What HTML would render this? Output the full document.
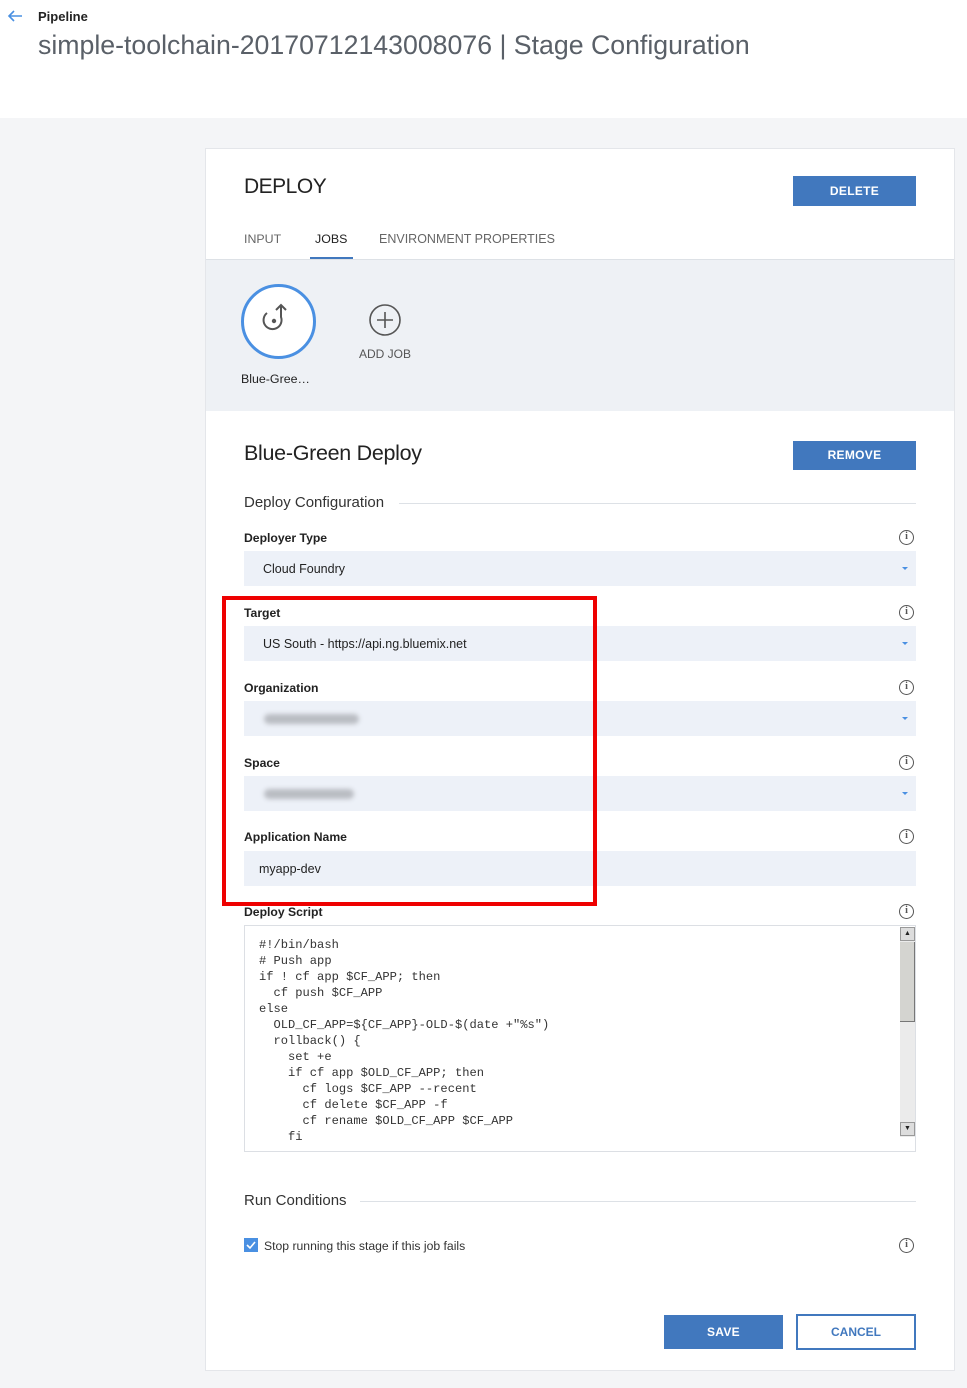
<!DOCTYPE html>
<html><head><meta charset="utf-8"><style>
*{box-sizing:border-box;margin:0;padding:0}
body{width:967px;height:1388px;background:#f4f5f7;font-family:"Liberation Sans",sans-serif;position:relative;overflow:hidden;color:#222}
.a{position:absolute}
.top{left:0;top:0;width:967px;height:118px;background:#fff}
.card{left:205px;top:148px;width:750px;height:1223px;background:#fff;border:1px solid #e4e6ea}
.lbl{font-size:12.2px;font-weight:bold;color:#222}
.inp{left:244px;width:672px;height:35px;background:#edf1f8;font-size:12.5px;color:#222;line-height:36px;padding-left:19px}
.arr{position:absolute;right:8px;top:16px;width:0;height:0;border-left:3px solid transparent;border-right:3px solid transparent;border-top:3px solid #4a90e2}
.info{width:15px;height:15px;border:1.3px solid #555;border-radius:50%;font:bold 10px "Liberation Serif",serif;color:#555;text-align:center;line-height:12px;left:899px}
.btn{background:#4178be;color:#fff;font-size:12px;font-weight:bold;text-align:center;letter-spacing:0.3px}
.blur{position:absolute;left:20px;top:13px;height:10px;background:#b9bcc2;border-radius:5px;filter:blur(2.5px)}
pre{font-family:"Liberation Mono",monospace;font-size:12.1px;line-height:16px;color:#333}
</style></head><body>
<div class="a top"></div>
<svg class="a" style="left:6px;top:9px" width="18" height="14"><path d="M16 7H3M8 2L3 7l5 5" stroke="#4a90e2" stroke-width="1.6" fill="none"/></svg>
<div class="a" style="left:38px;top:9px;font-size:13px;font-weight:bold;color:#222">Pipeline</div>
<div class="a" style="left:38px;top:30px;font-size:26.7px;color:#5a6068">simple-toolchain-20170712143008076 | Stage Configuration</div>

<div class="a card"></div>
<div class="a" style="left:244px;top:175px;font-size:21px;color:#222;letter-spacing:-0.5px">DEPLOY</div>
<div class="a btn" style="left:793px;top:176px;width:123px;height:30px;line-height:31px">DELETE</div>
<div class="a" style="left:244px;top:232px;font-size:12.4px;color:#666">INPUT</div>
<div class="a" style="left:315px;top:232px;font-size:12.4px;color:#222">JOBS</div>
<div class="a" style="left:310px;top:257px;width:43px;height:3px;background:#4178be"></div>
<div class="a" style="left:379px;top:232px;font-size:12.5px;color:#666">ENVIRONMENT PROPERTIES</div>
<div class="a" style="left:206px;top:259px;width:748px;height:152px;background:#eef1f5;border-top:1px solid #dde1e6"></div>
<div class="a" style="left:241px;top:284px;width:75px;height:75px;border:3px solid #4a90e2;border-radius:50%;background:#fff"></div>
<svg class="a" style="left:258px;top:302px" width="40" height="40"><path d="M9 11A9 9 0 1 0 23 15V3M18 8l5-5 5 5" stroke="#555" stroke-width="2" fill="none"/><circle cx="16" cy="19" r="2.2" fill="#555"/></svg>
<div class="a" style="left:241px;top:372px;font-size:12.4px;color:#222">Blue-Gree…</div>
<svg class="a" style="left:368px;top:303px" width="34" height="34"><circle cx="17" cy="17" r="15" stroke="#555" stroke-width="1.6" fill="none"/><path d="M17 9v16M9 17h16" stroke="#555" stroke-width="1.6"/></svg>
<div class="a" style="left:359px;top:347px;font-size:12px;color:#555">ADD JOB</div>

<div class="a" style="left:244px;top:441px;font-size:21.5px;color:#222;letter-spacing:-0.3px">Blue-Green Deploy</div>
<div class="a btn" style="left:793px;top:441px;width:123px;height:29px;line-height:29px">REMOVE</div>
<div class="a" style="left:244px;top:494px;font-size:15px;color:#333">Deploy Configuration</div>
<div class="a" style="left:399px;top:503px;width:517px;height:1px;background:#dde1e6"></div>

<div class="a lbl" style="left:244px;top:531px">Deployer Type</div><div class="a info" style="top:530px">i</div>
<div class="a inp" style="top:551px">Cloud Foundry<div class="arr"></div></div>
<div class="a lbl" style="left:244px;top:606px">Target</div><div class="a info" style="top:605px">i</div>
<div class="a inp" style="top:626px">US South - https://api.ng.bluemix.net<div class="arr"></div></div>
<div class="a lbl" style="left:244px;top:681px">Organization</div><div class="a info" style="top:680px">i</div>
<div class="a inp" style="top:701px"><div class="blur" style="width:95px"></div><div class="arr"></div></div>
<div class="a lbl" style="left:244px;top:756px">Space</div><div class="a info" style="top:755px">i</div>
<div class="a inp" style="top:776px"><div class="blur" style="width:90px"></div><div class="arr"></div></div>
<div class="a lbl" style="left:244px;top:830px">Application Name</div><div class="a info" style="top:829px">i</div>
<div class="a inp" style="top:851px;padding-left:15px">myapp-dev</div>
<div class="a lbl" style="left:244px;top:905px">Deploy Script</div><div class="a info" style="top:904px">i</div>

<div class="a" style="left:244px;top:925px;width:672px;height:227px;border:1px solid #dcdfe4;background:#fff;overflow:hidden">
<pre style="position:absolute;left:14px;top:11px">#!/bin/bash
# Push app
if ! cf app $CF_APP; then
  cf push $CF_APP
else
  OLD_CF_APP=${CF_APP}-OLD-$(date +"%s")
  rollback() {
    set +e
    if cf app $OLD_CF_APP; then
      cf logs $CF_APP --recent
      cf delete $CF_APP -f
      cf rename $OLD_CF_APP $CF_APP
    fi</pre>
<div style="position:absolute;left:655px;top:1px;width:15px;height:210px;background:#ebebeb"></div>
<div style="position:absolute;left:655px;top:1px;width:15px;height:14px;background:#ddd;border:1px solid #999;font-size:7px;text-align:center;line-height:12px">▲</div>
<div style="position:absolute;left:655px;top:16px;width:15px;height:80px;background:#d4d4d0;border-right:1px solid #777;border-bottom:1px solid #777"></div>
<div style="position:absolute;left:655px;top:196px;width:15px;height:14px;background:#ddd;border:1px solid #999;font-size:7px;text-align:center;line-height:12px">▼</div>
</div>
<div class="a" style="left:222px;top:596px;width:375px;height:310px;border:4px solid #ee0000"></div>

<div class="a" style="left:244px;top:1192px;font-size:15px;color:#333">Run Conditions</div>
<div class="a" style="left:360px;top:1201px;width:556px;height:1px;background:#dde1e6"></div>
<div class="a" style="left:244px;top:1238px;width:14px;height:14px;background:#4a90e2"></div>
<svg class="a" style="left:244px;top:1238px" width="14" height="14"><path d="M3 7l3 3 5-6" stroke="#fff" stroke-width="1.6" fill="none"/></svg>
<div class="a" style="left:264px;top:1239px;font-size:12.2px;color:#333">Stop running this stage if this job fails</div>
<div class="a info" style="top:1238px">i</div>

<div class="a btn" style="left:664px;top:1315px;width:119px;height:34px;line-height:35px">SAVE</div>
<div class="a" style="left:796px;top:1314px;width:120px;height:36px;border:2px solid #4178be;color:#4178be;font-size:12px;font-weight:bold;text-align:center;line-height:33px">CANCEL</div>
</body></html>
